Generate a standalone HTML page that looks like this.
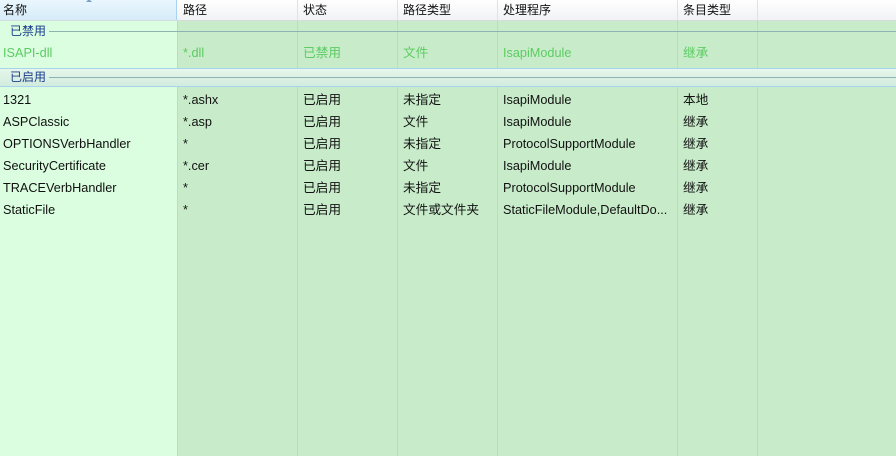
<!DOCTYPE html>
<html><head><meta charset="utf-8"><style>
body{margin:0;width:896px;height:456px;overflow:hidden;position:relative;font-family:"Liberation Sans","Noto Sans CJK SC",sans-serif;font-size:12.7px;color:#111;background:#c8ecca}
.c1{position:absolute;left:0;top:0;width:177px;height:456px;background:#dafedf}
.vl{position:absolute;top:20px;width:1px;height:436px;background:#b2dcdc}
.hdr{position:absolute;top:0;left:0;width:896px;height:20px;background:linear-gradient(#ffffff,#f1f2f4);border-bottom:1px solid #d6dbe0}
.h1{position:absolute;left:0;top:0;width:176px;height:20px;background:linear-gradient(#eaf6fd,#d6ecf9);border-right:1px solid #a8d2ef}
.hs{position:absolute;top:0;width:1px;height:20px;background:#e0e2e5}
.t{position:absolute;white-space:nowrap;line-height:14px}
.hdr .t{font-size:12px}
.g{color:#5ccb62}
.gl{position:absolute;height:1px;background:#8fb3b3}
.band{position:absolute;left:0;top:68px;width:896px;height:19px;background:linear-gradient(#e6f6ea,#d2ecde);border-top:1px solid #a9d4f0;border-bottom:1px solid #a9d4f0;box-sizing:border-box}
.gt{color:#1a3c8c;font-size:12px}
</style></head><body>
<div class="c1"></div>
<div class="vl" style="left:177px"></div><div class="vl" style="left:297px"></div><div class="vl" style="left:397px"></div><div class="vl" style="left:497px"></div><div class="vl" style="left:677px"></div><div class="vl" style="left:757px"></div>
<div class="hdr"><div class="h1"></div>
<div class="hs" style="left:297px"></div><div class="hs" style="left:397px"></div><div class="hs" style="left:497px"></div><div class="hs" style="left:677px"></div><div class="hs" style="left:757px"></div>
<div style="position:absolute;left:86px;top:-1px;width:0;height:0;border-left:3px solid transparent;border-right:3px solid transparent;border-bottom:3px solid #7aa0c8"></div>
<div class="t" style="left:3px;top:3px">名称</div><div class="t" style="left:183px;top:3px">路径</div><div class="t" style="left:303px;top:3px">状态</div><div class="t" style="left:403px;top:3px">路径类型</div><div class="t" style="left:503px;top:3px">处理程序</div><div class="t" style="left:683px;top:3px">条目类型</div>
</div>
<div class="t gt" style="left:10px;top:24px">已禁用</div><div class="gl" style="left:49px;top:31px;width:847px"></div>
<div class="t g" style="left:3px;top:46px">ISAPI-dll</div><div class="t g" style="left:183px;top:46px">*.dll</div><div class="t g" style="left:303px;top:46px">已禁用</div><div class="t g" style="left:403px;top:46px">文件</div><div class="t g" style="left:503px;top:46px">IsapiModule</div><div class="t g" style="left:683px;top:46px">继承</div>
<div class="band"></div>
<div class="t gt" style="left:10px;top:70px">已启用</div><div class="gl" style="left:49px;top:77px;width:847px"></div>
<div class="t" style="left:3px;top:93px">1321</div><div class="t" style="left:183px;top:93px">*.ashx</div><div class="t" style="left:303px;top:93px">已启用</div><div class="t" style="left:403px;top:93px">未指定</div><div class="t" style="left:503px;top:93px">IsapiModule</div><div class="t" style="left:683px;top:93px">本地</div>
<div class="t" style="left:3px;top:115px">ASPClassic</div><div class="t" style="left:183px;top:115px">*.asp</div><div class="t" style="left:303px;top:115px">已启用</div><div class="t" style="left:403px;top:115px">文件</div><div class="t" style="left:503px;top:115px">IsapiModule</div><div class="t" style="left:683px;top:115px">继承</div>
<div class="t" style="left:3px;top:137px">OPTIONSVerbHandler</div><div class="t" style="left:183px;top:137px">*</div><div class="t" style="left:303px;top:137px">已启用</div><div class="t" style="left:403px;top:137px">未指定</div><div class="t" style="left:503px;top:137px">ProtocolSupportModule</div><div class="t" style="left:683px;top:137px">继承</div>
<div class="t" style="left:3px;top:159px">SecurityCertificate</div><div class="t" style="left:183px;top:159px">*.cer</div><div class="t" style="left:303px;top:159px">已启用</div><div class="t" style="left:403px;top:159px">文件</div><div class="t" style="left:503px;top:159px">IsapiModule</div><div class="t" style="left:683px;top:159px">继承</div>
<div class="t" style="left:3px;top:181px">TRACEVerbHandler</div><div class="t" style="left:183px;top:181px">*</div><div class="t" style="left:303px;top:181px">已启用</div><div class="t" style="left:403px;top:181px">未指定</div><div class="t" style="left:503px;top:181px">ProtocolSupportModule</div><div class="t" style="left:683px;top:181px">继承</div>
<div class="t" style="left:3px;top:203px">StaticFile</div><div class="t" style="left:183px;top:203px">*</div><div class="t" style="left:303px;top:203px">已启用</div><div class="t" style="left:403px;top:203px">文件或文件夹</div><div class="t" style="left:503px;top:203px">StaticFileModule,DefaultDo...</div><div class="t" style="left:683px;top:203px">继承</div>
</body></html>
